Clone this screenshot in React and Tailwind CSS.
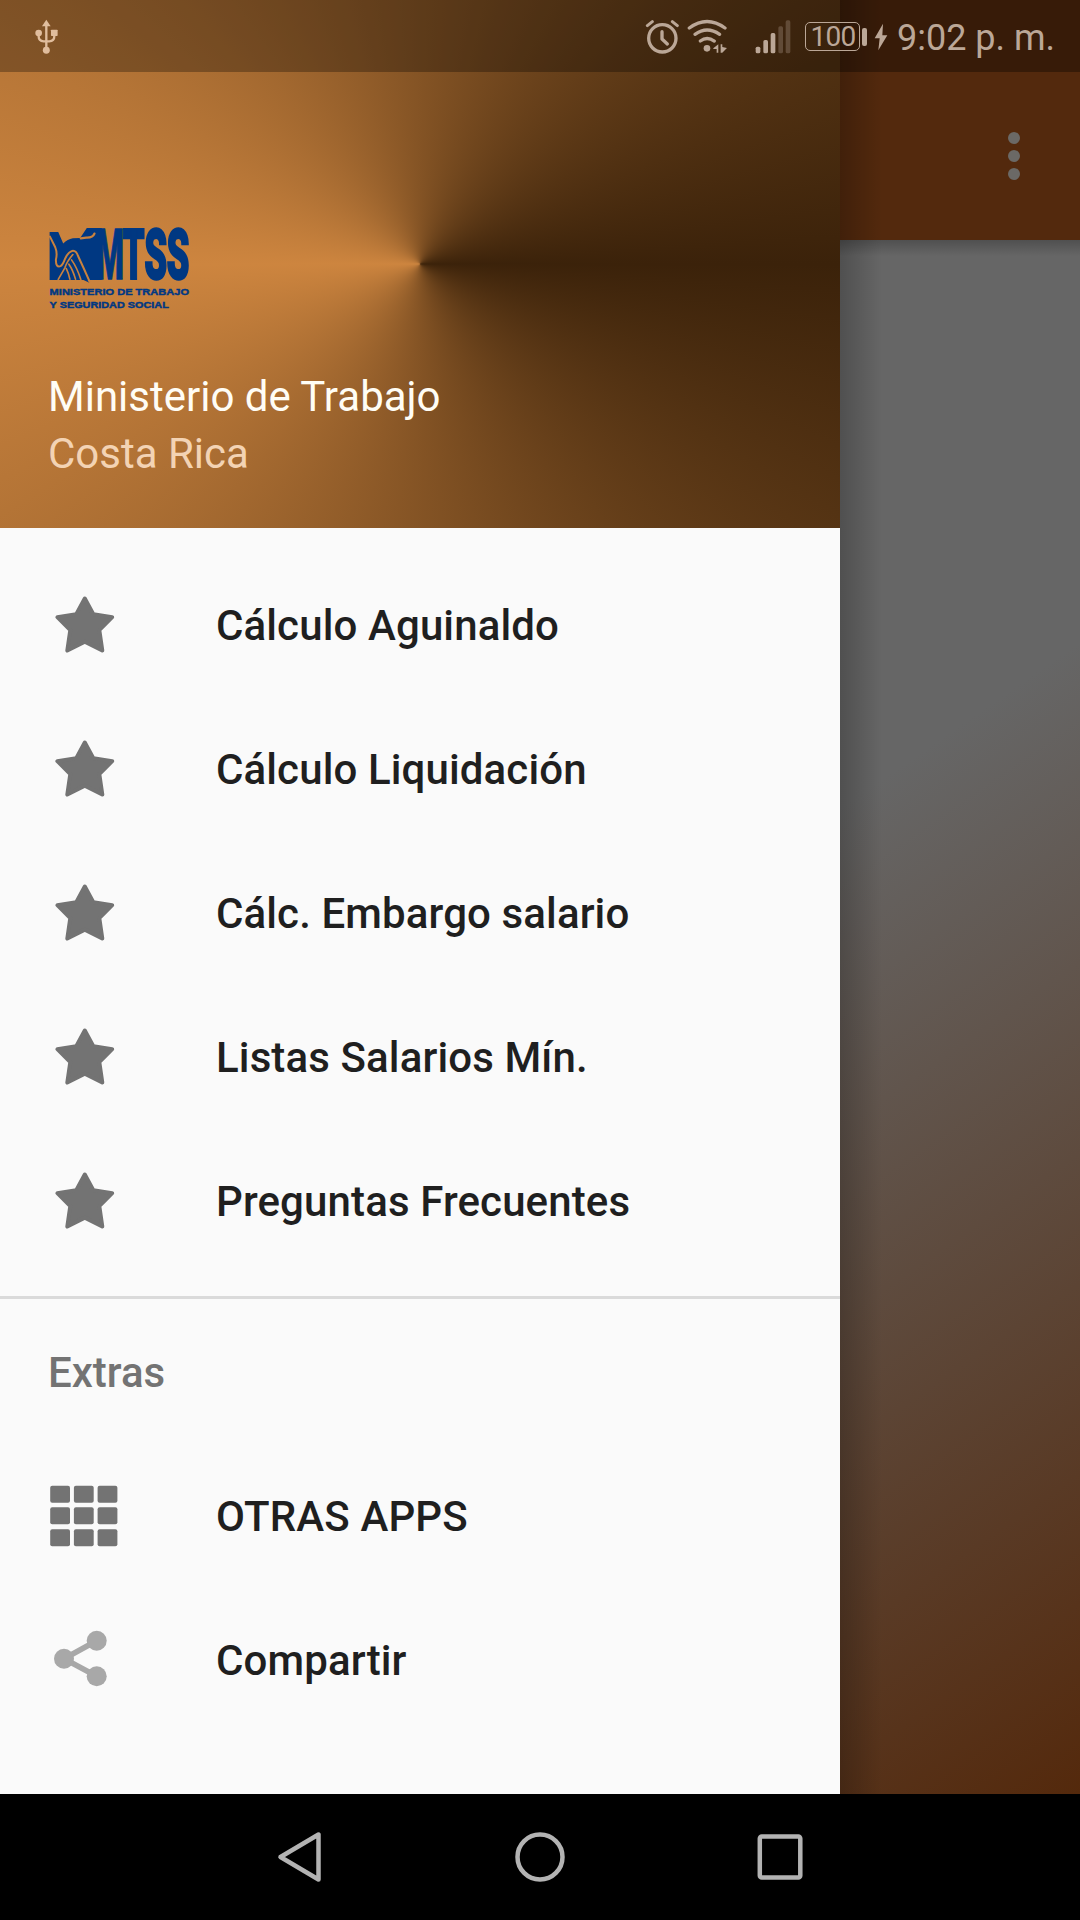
const mainItems = [
  'Cálculo Aguinaldo',
  'Cálculo Liquidación',
  'Cálc. Embargo salario',
  'Listas Salarios Mín.',
  'Preguntas Frecuentes',
];

function StarIcon() {
  return (
    <svg viewBox="0 0 72 72" className="w-[72px] h-[72px] text-[#737373]">
      <path
        d="M36.8 10.5L45.3 26.2L64.2 29.2L51.3 42L54.3 62.5L36.8 53.6L19.3 62.5L22.3 42L9.4 29.2L28.3 26.2Z"
        fill="currentColor"
        stroke="currentColor"
        strokeWidth="4"
        strokeLinejoin="round"
      />
    </svg>
  );
}

function GridIcon() {
  return (
    <svg viewBox="0 0 72 72" className="w-[72px] h-[72px] text-[#737373]" fill="currentColor">
      {[6.7, 28.3, 50.2].map((y) =>
        [2.2, 25.9, 49.6].map((x) => (
          <rect key={`${x}-${y}`} x={x} y={y} width="19.8" height="17" rx="2" />
        ))
      )}
    </svg>
  );
}

function ShareIcon() {
  return (
    <svg viewBox="0 0 72 72" className="w-[72px] h-[72px] text-[#a8a8a8]" fill="currentColor">
      <path d="M48.7 17.7L16 35.7L48.7 53.3" fill="none" stroke="currentColor" strokeWidth="5.6" />
      <circle cx="48.7" cy="17.7" r="10" />
      <circle cx="16" cy="35.7" r="10" />
      <circle cx="48.7" cy="53.3" r="10" />
    </svg>
  );
}

function Logo() {
  return (
    <svg viewBox="54 48 432 250" className="block w-[144px] h-[83px] overflow-visible" fill="#003882">
      <path d="M58 66H84L99 101Q112 88 128 85L150 84L170 54H215V211H172L178 219L160 211H58Z" />
      <g fill="none" stroke="#c9823e" strokeLinecap="round" strokeLinejoin="round">
        <path d="M193 71Q188 84 168 83L152 85" strokeWidth="7" />
        <path d="M59 80L75 112Q82 130 77 149Q76 174 91 169Q98 165 104 148Q112 128 126 123Q138 121 144 139L161 176L178 214" strokeWidth="6" />
        <path d="M128 134Q110 155 104 174L84 209" strokeWidth="5" />
        <path d="M108 176Q115 190 119 208" strokeWidth="5" />
        <path d="M116 163Q128 180 136 208" strokeWidth="5" />
        <path d="M124 150Q140 172 152 209" strokeWidth="5" />
      </g>
      <g stroke="#003882" className="font-['Roboto'] font-black">
        <text x="197" y="209" fontSize="214" strokeWidth="4" textLength="85" lengthAdjust="spacingAndGlyphs">M</text>
        <text x="278" y="209" fontSize="214" strokeWidth="6" textLength="66" lengthAdjust="spacingAndGlyphs">T</text>
        <text x="344" y="208" fontSize="210" strokeWidth="8" textLength="68" lengthAdjust="spacingAndGlyphs">S</text>
        <text x="411" y="208" fontSize="210" strokeWidth="8" textLength="68" lengthAdjust="spacingAndGlyphs">S</text>
      </g>
      <g stroke="#003882" strokeWidth="1.4" className="font-['Liberation_Sans'] font-bold">
        <text x="58" y="255" fontSize="30" textLength="420" lengthAdjust="spacingAndGlyphs">MINISTERIO DE TRABAJO</text>
        <text x="58" y="294" fontSize="30" textLength="359" lengthAdjust="spacingAndGlyphs">Y SEGURIDAD SOCIAL</text>
      </g>
    </svg>
  );
}

function UsbIcon() {
  return (
    <svg viewBox="102 56 76 108" className="w-[25.3px] h-[36px]" fill="currentColor">
      <path d="M139 58L152 78H126Z" />
      <path d="M139 72V150M116 98V108Q116 123 131 123H148Q163 123 163 108V98" fill="none" stroke="currentColor" strokeWidth="7" />
      <circle cx="116" cy="98" r="10" />
      <rect x="153" y="88" width="20" height="19" rx="2" />
      <circle cx="139" cy="150" r="10.5" />
    </svg>
  );
}

function AlarmIcon() {
  return (
    <svg viewBox="76 56 104 106" className="w-[34.7px] h-[35.3px]" fill="none" stroke="currentColor" strokeLinecap="round">
      <circle cx="128" cy="114" r="41" strokeWidth="10" />
      <path d="M127 94V116L143 131" strokeWidth="10" strokeLinejoin="round" />
      <path d="M83 76L98 64M173 76L158 64" strokeWidth="9" />
    </svg>
  );
}

function WifiIcon() {
  return (
    <svg viewBox="204 56 124 104" className="w-[41.3px] h-[34.7px]" fill="currentColor">
      <g fill="none" stroke="currentColor" strokeWidth="10" strokeLinecap="round">
        <path d="M211 83Q264 44 318 83" />
        <path d="M228 102Q264 76 302 102" />
        <path d="M244 122Q264 107 286 122" />
      </g>
      <circle cx="264" cy="144" r="10" />
      <path d="M283 144L298 132V157H293V146H283ZM305 132H310V140L324 143L310 157H305Z" />
    </svg>
  );
}

function SignalIcon() {
  return (
    <svg viewBox="406 56 110 102" className="w-[36.7px] h-[34px]" fill="currentColor">
      <rect x="408" y="136" width="14" height="20" rx="5" />
      <rect x="431" y="116" width="14" height="40" rx="5" />
      <rect x="453" y="95" width="14" height="61" rx="5" />
      <rect x="476" y="75" width="14" height="81" rx="5" opacity="0.3" />
      <rect x="498" y="57" width="14" height="99" rx="5" opacity="0.3" />
    </svg>
  );
}

function StatusBar() {
  return (
    <div className="h-[72px] flex">
      <div className="w-[840px] bg-black/29" />
      <div className="flex-1 bg-black/33" />
    </div>
  );
}

function StatusIcons() {
  return (
    <div className="h-[72px] pt-px flex items-center justify-between pl-[34px] pr-[25px]">
      <div className="text-[#e0bd9d]">
        <UsbIcon />
      </div>
      <div className="flex items-center text-[#bba797]">
        <AlarmIcon />
        <div className="ml-[8px]"><WifiIcon /></div>
        <div className="ml-[26px]"><SignalIcon /></div>
        <div className="ml-[14px] w-[55px] h-[29px] border-[1.5px] border-current rounded-[5px] flex items-center justify-center text-[28px] leading-none tracking-[-0.8px]">
          100
        </div>
        <div className="ml-[2px] w-[4.5px] h-[18px] rounded-[2px] bg-current" />
        <svg viewBox="763 68 42 84" className="ml-[7px] w-[14px] h-[28px]" fill="currentColor">
          <path d="M790 70L765 114H780L776 150L803 105H788Z" />
        </svg>
        <span className="ml-[9px] pt-[3px] text-[36px] leading-none whitespace-nowrap">9:02 p. m.</span>
      </div>
    </div>
  );
}

function Backdrop() {
  return (
    <div className="col-start-1 row-start-1 flex flex-col">
      <div className="h-[240px] bg-[#53290d] flex items-end justify-end">
        <div className="h-[168px] w-[132px] flex flex-col items-center justify-center gap-[6px]">
          <span className="w-3 h-3 rounded-full bg-[#6b6966]" />
          <span className="w-3 h-3 rounded-full bg-[#6b6966]" />
          <span className="w-3 h-3 rounded-full bg-[#6b6966]" />
        </div>
      </div>
      <div className="flex-1 bg-[linear-gradient(145.2deg,#666_50%,#54290c_100%)]">
        <div className="h-[16px] bg-linear-to-b from-black/22 to-transparent" />
      </div>
    </div>
  );
}

function MenuItem({ icon, label }) {
  return (
    <li className="h-[144px] pl-12 flex items-center gap-24">
      {icon}
      <span className="pt-1 text-[42px] leading-none font-medium tracking-[0.12px] text-[#1f1f1f]">{label}</span>
    </li>
  );
}

function Drawer() {
  return (
    <div className="col-start-1 row-start-1 flex">
      <aside className="w-[840px] bg-[#fafafa] flex flex-col">
        <header className="h-[528px] px-12 pt-[226px] bg-[conic-gradient(from_90deg_at_50%_50%,#3b220a,#cd853f,#3b220a)]">
          <Logo />
          <div className="mt-[59px] text-[42px] leading-[57px] text-[#fffdf5]">Ministerio de Trabajo</div>
          <div className="text-[42px] leading-[57px] text-[#f3d3b4]">Costa Rica</div>
        </header>
        <ul className="pt-6 pb-6 border-b-[3px] border-[#dadada]">
          {mainItems.map((label) => (
            <MenuItem key={label} icon={<StarIcon />} label={label} />
          ))}
        </ul>
        <h2 className="h-[144px] px-12 pt-1 flex items-center text-[42px] leading-none font-medium text-[#737373]">Extras</h2>
        <ul>
          <MenuItem icon={<GridIcon />} label="OTRAS APPS" />
          <MenuItem icon={<ShareIcon />} label="Compartir" />
        </ul>
      </aside>
      <div className="w-[42px] bg-linear-to-r from-black/22 to-transparent" />
    </div>
  );
}

function NavBar() {
  return (
    <nav className="h-[126px] bg-black flex items-center justify-center gap-[180px] text-[#b3b3b3]">
      <svg viewBox="0 0 60 60" className="w-[60px] h-[60px]" fill="none" stroke="currentColor" strokeWidth="4.5" strokeLinejoin="round">
        <path d="M10.5 30L48.5 7.5V52.5Z" />
      </svg>
      <svg viewBox="0 0 60 60" className="w-[60px] h-[60px]" fill="none" stroke="currentColor" strokeWidth="4.5">
        <circle cx="30" cy="30" r="22.5" />
      </svg>
      <svg viewBox="0 0 60 60" className="w-[60px] h-[60px]" fill="none" stroke="currentColor" strokeWidth="4.5">
        <rect x="9.8" y="9.5" width="40.5" height="41" rx="2" />
      </svg>
    </nav>
  );
}

export default function App() {
  return (
    <div className="w-[1080px] h-[1920px] overflow-hidden flex flex-col font-['Roboto',sans-serif]">
      <main className="flex-1 grid grid-cols-1 grid-rows-1">
        <Backdrop />
        <Drawer />
        <div className="col-start-1 row-start-1"><StatusBar /></div>
        <div className="col-start-1 row-start-1"><StatusIcons /></div>
      </main>
      <NavBar />
    </div>
  );
}
